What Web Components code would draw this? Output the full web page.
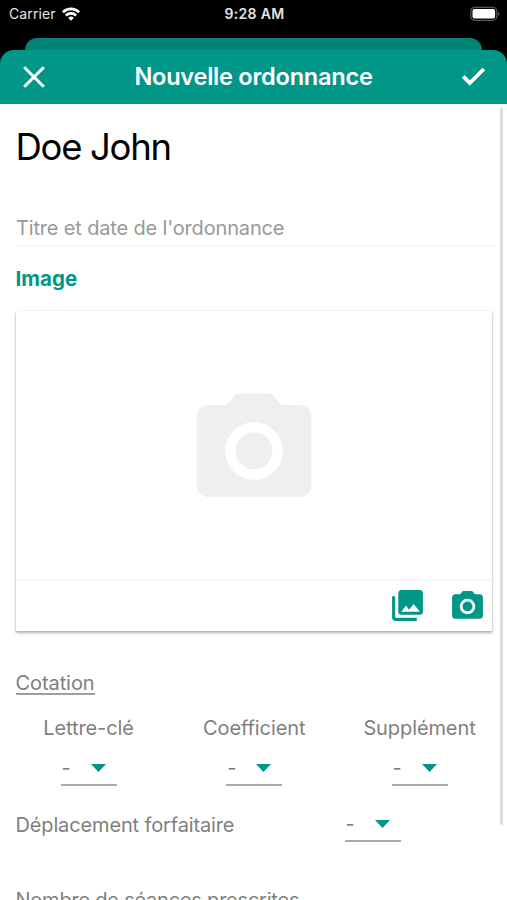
<!DOCTYPE html>
<html lang="fr">
<head>
<meta charset="utf-8">
<title>Nouvelle ordonnance</title>
<style>
html,body{margin:0;height:100%;overflow:hidden;background:#fff}
body{font-family:Inter,"Liberation Sans",sans-serif;color:#7f7f7f}
</style>
</head>
<body>
<rx-screen></rx-screen>
<script>
function define(name, html) {
  const t = document.createElement('template');
  t.innerHTML = html;
  customElements.define(name, class extends HTMLElement {
    constructor() {
      super();
      this.attachShadow({mode: 'open'}).append(t.content.cloneNode(true));
    }
  });
}

const CAMERA = 'M9 2 7.17 4H4c-1.1 0-2 .9-2 2v12c0 1.1.9 2 2 2h16c1.1 0 2-.9 2-2V6c0-1.1-.9-2-2-2h-3.170L15 2H9zm3 15c-2.76 0-5-2.24-5-5s2.240-5 5-5 5 2.240 5 5-2.240 5-5 5z';

define('rx-camera', `<style>:host{display:block}svg{display:block;width:100%;height:100%;fill:currentColor}</style>
<svg viewBox="0 0 24 24"><path d="${CAMERA}"/><circle cx="12" cy="12" r="3.2"/></svg>`);

define('rx-gallery', `<style>:host{display:block}svg{display:block;width:100%;height:100%;fill:currentColor}</style>
<svg viewBox="0 0 24 24"><path d="M22 16V4c0-1.100-.9-2-2-2H8c-1.100 0-2 .9-2 2v12c0 1.100.9 2 2 2h12c1.100 0 2-.9 2-2zm-11-4 2.030 2.710L16 11l4 5H8l3-4zM2 6v14c0 1.100.9 2 2 2h14v-2H4V6H2z"/></svg>`);

define('rx-status-bar', `<style>
:host{display:grid;grid-template-columns:1fr auto 1fr;align-items:center;height:28px;padding:0 7px 0 9px;box-sizing:border-box;color:#e4e4e4;font-size:14px}
.l{display:flex;align-items:center;gap:6px}
.l span{letter-spacing:.1px;margin-top:-1px}
.time{font-weight:600;font-size:14px;letter-spacing:.3px;margin-top:-1px}
svg{display:block}
.bat{justify-self:end;margin-top:-1px}
</style>
<div class="l"><span>Carrier</span>
<svg width="18" height="14" viewBox="0 0 18 14" fill="none" stroke="#fff" stroke-width="2.600"><path d="M.9 5.200a11.600 11.600 0 0 1 16.200 0M3.900 8.500a7.300 7.300 0 0 1 10.200 0"/><path d="M9 13.700 6.200 10.900a4 4 0 0 1 5.600 0z" fill="#fff" stroke="none"/></svg></div>
<span class="time">9:28 AM</span>
<svg class="bat" width="30" height="16" viewBox="0 0 30 16"><rect x=".8" y="1.300" width="26" height="13" rx="4" fill="none" stroke="#555" stroke-width="1.300"/><rect x="2.500" y="3" width="22.600" height="9.600" rx="2" fill="#fff"/><path d="M28 5.700c1.900.8 1.900 3.600 0 4.400z" fill="#555"/></svg>`);

define('rx-header', `<style>
:host{display:grid;grid-template-columns:36px 1fr 36px;align-items:center;height:54px;padding:0 16px;box-sizing:border-box;background:#009688;color:#fff;border-radius:14px 14px 0 0}
h1{margin:-2px 0 0;text-align:center;font-size:23.600px;font-weight:580;letter-spacing:-.260px;white-space:nowrap}
svg{display:block}
</style>
<svg width="36" height="36" viewBox="0 0 36 36" fill="none" stroke="#fff" stroke-width="3"><path d="M8.200 8.200 27.800 27.800M27.800 8.200 8.200 27.800"/></svg>
<h1><slot></slot></h1>
<svg width="36" height="36" viewBox="0 0 36 36" fill="none" stroke="#fff" stroke-width="3.800"><path d="m8.200 17.400 6.600 6.600L28.800 10"/></svg>`);

define('rx-title-field', `<style>
:host{display:block;height:29px;border-bottom:2px solid #f5f5f5;font-size:20px;line-height:24px;color:#999;white-space:nowrap}
span{padding-left:.5px;letter-spacing:-.160px}
</style><span><slot></slot></span>`);

define('rx-image-card', `<style>
:host{display:flex;flex-direction:column;width:476px;height:320px;background:#fff;border-radius:1px;box-shadow:0 2px 3px rgba(0,0,0,.3),0 0 2px rgba(0,0,0,.12)}
.view{flex:1;display:flex;align-items:center;justify-content:center;padding-top:11px;padding-left:1px;border-bottom:2px solid #f7f7f7}
.view rx-camera{width:138px;height:138px;color:#efefef}
.bar{display:flex;justify-content:flex-end;align-items:center;gap:23px;height:50px;padding-right:6px;color:#009688}
.bar>*{width:37px;height:37px;margin-top:-1px}
.bar rx-camera{margin-top:1px}
</style>
<div class="view"><rx-camera></rx-camera></div>
<div class="bar"><rx-gallery></rx-gallery><rx-camera></rx-camera></div>`);

define('rx-select', `<style>
:host{display:flex;align-items:center;width:56px;height:34px;box-sizing:border-box;border-bottom:2px solid #aaa;padding-left:1px;font-size:20px}
span{width:29px;line-height:24px}
svg{display:block}
</style><span>-</span><svg width="15" height="8" viewBox="0 0 15 8"><path d="M0 0h15L7.500 8z" fill="#009688"/></svg>`);

define('rx-quotation', `<style>
:host{display:block;font-size:20px;line-height:24px;white-space:nowrap}
.h{display:inline-block;border-bottom:2px solid #a0a0a0;height:22px;letter-spacing:-.080px}
.cols{display:grid;grid-template-columns:146px 185.500px 145px;margin-top:21px;justify-items:center}
.cols span{letter-spacing:-.1px}
.cols rx-select{margin-top:12px}
.row{display:flex;align-items:center;margin-top:22px}
.row span{width:329px;letter-spacing:-.140px}
.next{margin-top:46px;letter-spacing:-.220px}
</style>
<div class="h">Cotation</div>
<div class="cols"><span>Lettre-clé</span><span>Coefficient</span><span>Supplément</span>
<rx-select></rx-select><rx-select></rx-select><rx-select></rx-select></div>
<div class="row"><span>Déplacement forfaitaire</span><rx-select></rx-select></div>
<div class="next">Nombre de séances prescrites</div>`);

define('rx-screen', `<style>
:host{display:flex;flex-direction:column;width:507px;height:900px;overflow:hidden}
.top{background:#000;display:flex;flex-direction:column}
.behind{height:26px;margin:10px 25px -14px;background:#008477;border-radius:12px 12px 0 0}
.body{flex:1;min-height:0;display:flex;background:#fff;overflow:hidden}
main{width:478px;padding-left:15.500px;flex:none}
.name{margin:20px 0 0;font-size:36.500px;line-height:47px;font-weight:400;color:#000;letter-spacing:-1.300px}
rx-title-field{margin-top:45px}
h3{margin:18px 0 19px;font-size:20.500px;line-height:27px;font-weight:650;letter-spacing:.050px;color:#009688}
rx-quotation{margin-top:40px}
.scroll{width:3px;height:717px;margin:4px 0 0 6.500px;background:#dedede;border-radius:2px}
</style>
<div class="top"><rx-status-bar></rx-status-bar><div class="behind"></div><rx-header>Nouvelle ordonnance</rx-header></div>
<div class="body"><main>
<h2 class="name">Doe John</h2>
<rx-title-field>Titre et date de l'ordonnance</rx-title-field>
<h3>Image</h3>
<rx-image-card></rx-image-card>
<rx-quotation></rx-quotation>
</main><div class="scroll"></div></div>`);
</script>
</body>
</html>
